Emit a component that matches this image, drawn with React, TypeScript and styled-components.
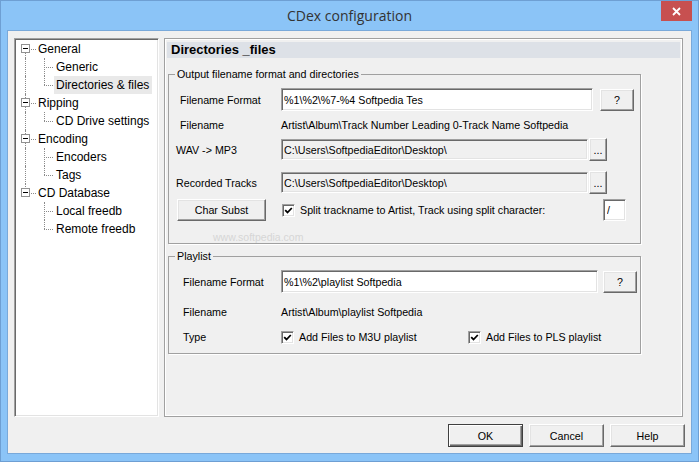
import styled, { createGlobalStyle } from 'styled-components'

const GlobalStyle = createGlobalStyle`
  * { box-sizing: border-box; }
  html, body { margin: 0; padding: 0; }
  body {
    font-family: "Liberation Sans", Arial, sans-serif;
    font-size: 10.7px;
    color: #000;
    background: #8bc4f7;
  }
`

const Frame = styled.div`
  width: 699px;
  height: 462px;
  display: flex;
  flex-direction: column;
  background: #8bc4f7;
  border: 1px solid #6e9fd3;
  padding: 0 6px 7px;
`

const TitleBar = styled.div`
  height: 29px;
  margin: 0 -6px;
  display: grid;
  grid-template-columns: 1fr auto 1fr;
`

const Title = styled.div`
  grid-column: 2;
  align-self: center;
  font-family: "Open Sans", "Noto Sans", sans-serif;
  font-size: 14px;
  color: #333;
`

const CloseButton = styled.div`
  grid-column: 3;
  justify-self: end;
  align-self: start;
  width: 31px;
  height: 20px;
  margin-right: 6px;
  background: #c75050;
  display: flex;
  align-items: center;
  justify-content: center;
`

const Client = styled.div`
  flex: 1;
  display: flex;
  flex-direction: column;
  gap: 7px;
  background: #f0f0f0;
  border: 1px solid #79a9da;
  padding: 7px 8px 6px 6px;
`

const Body = styled.div`
  display: flex;
  gap: 5px;
  height: 379px;
`

const Tree = styled.div`
  flex: none;
  width: 145px;
  padding-top: 1px;
  background: #fff;
  border: 1px solid;
  border-color: #a0a0a0 #fff #fff #a0a0a0;
  box-shadow: inset 1px 1px 0 #696969, inset -1px -1px 0 #e3e3e3;
`

const TreeRow = styled.div`
  display: flex;
  height: 18px;
  white-space: nowrap;
`

const Guide = styled.span<{ $w: number; $x: number; $up?: boolean; $down?: boolean; $branch?: number }>`
  position: relative;
  flex: none;
  width: ${p => p.$w}px;
  &::before {
    content: "";
    display: ${p => (p.$up || p.$down ? 'block' : 'none')};
    position: absolute;
    left: ${p => p.$x}px;
    top: ${p => (p.$up ? 0 : 9)}px;
    bottom: ${p => (p.$down ? 0 : 9)}px;
    border-left: 1px dotted #8a8a8a;
  }
  &::after {
    content: "";
    display: ${p => (p.$branch ? 'block' : 'none')};
    position: absolute;
    left: ${p => p.$x}px;
    top: 9px;
    width: ${p => p.$branch ?? 0}px;
    border-top: 1px dotted #8a8a8a;
  }
`

const Expander = styled.span`
  position: absolute;
  left: 6px;
  top: 4px;
  z-index: 1;
  width: 9px;
  height: 9px;
  background: #fff;
  border: 1px solid #919191;
  &::after {
    content: "";
    position: absolute;
    left: 1px;
    top: 3px;
    width: 5px;
    height: 1px;
    background: #000;
  }
`

const NodeLabel = styled.span<{ $selected?: boolean }>`
  height: 18px;
  line-height: 18px;
  padding: 0 3px 0 2px;
  font-size: 12px;
  background: ${p => (p.$selected ? '#e9e9e9' : 'transparent')};
`

const Page = styled.div`
  flex: 1;
  display: flex;
  flex-direction: column;
  border: 1px solid #a0a0a0;
  box-shadow: inset 0 0 0 1px #fff;
  padding: 3px 2px 0;
`

const PageHeader = styled.div`
  height: 16px;
  line-height: 16px;
  padding-left: 4px;
  background: #dde1e7;
  font-size: 13px;
  font-weight: bold;
`

const Group = styled.fieldset<{ $mt: number; $pb: number }>`
  width: 473px;
  min-width: 0;
  margin: ${p => p.$mt}px 0 0 1px;
  padding: 0 0 ${p => p.$pb}px;
  border: 1px solid #a0a0a0;
  box-shadow: 1px 1px 0 #fff;
`

const Legend = styled.legend`
  margin-left: 6px;
  padding: 0 2px;
  font-size: 10.7px;
  line-height: 13px;
`

const FieldRow = styled.div<{ $mt: number; $h: number }>`
  display: flex;
  align-items: center;
  height: ${p => p.$h}px;
  margin-top: ${p => p.$mt}px;
  white-space: nowrap;
`

const Label = styled.span<{ $indent: number }>`
  flex: none;
  width: 112px;
  padding-left: ${p => p.$indent}px;
`

const TextBox = styled.input<{ $w: number; $h: number; $gray?: boolean }>`
  flex: none;
  width: ${p => p.$w}px;
  height: ${p => p.$h}px;
  font: inherit;
  color: #000;
  background: ${p => (p.$gray ? '#f0f0f0' : '#fff')};
  border: 1px solid;
  border-color: #a0a0a0 #fff #fff #a0a0a0;
  box-shadow: inset 1px 1px 0 #696969, inset -1px -1px 0 #e3e3e3;
  padding: 0 2px;
  margin: 0;
  outline: none;
`

const Button = styled.button<{ $w: number; $h: number; $ml?: number; $default?: boolean }>`
  flex: none;
  width: ${p => p.$w}px;
  height: ${p => p.$h}px;
  margin: 0 0 0 ${p => p.$ml ?? 0}px;
  padding: 0;
  font: inherit;
  color: #000;
  background: #f0f0f0;
  border: 1px solid;
  border-color: ${p => (p.$default ? '#404040' : '#fff #696969 #696969 #fff')};
  box-shadow: ${p =>
    p.$default
      ? 'inset 1px 1px 0 #fff, inset -1px -1px 0 #696969, inset -2px -2px 0 #a0a0a0'
      : 'inset -1px -1px 0 #a0a0a0, inset 1px 1px 0 #e3e3e3'};
`

const ActionRow = styled.div`
  display: flex;
  align-items: center;
  height: 24px;
  margin-top: 4px;
  padding-left: 8px;
  white-space: nowrap;
`

const CheckItem = styled.span<{ $w?: number; $ml?: number }>`
  display: flex;
  align-items: center;
  gap: 5px;
  margin-left: ${p => p.$ml ?? 0}px;
  width: ${p => (p.$w ? `${p.$w}px` : 'auto')};
`

const Box = styled.span`
  flex: none;
  width: 13px;
  height: 13px;
  background: #fff;
  border: 1px solid;
  border-color: #a0a0a0 #fff #fff #a0a0a0;
  box-shadow: inset 1px 1px 0 #696969, inset -1px -1px 0 #e3e3e3;
  display: flex;
  align-items: center;
  justify-content: center;
`

const SplitChar = styled(TextBox)`
  margin-left: auto;
  margin-right: 14px;
  padding-left: 3px;
`

const Watermark = styled.div`
  height: 10px;
  margin-top: 10px;
  padding-left: 44px;
  font-size: 10.5px;
  line-height: 10px;
  color: #d6d6d6;
`

const ButtonBar = styled.div`
  display: flex;
  justify-content: flex-end;
  gap: 6px;
  margin-right: -2px;
`

const tree = [
  { label: 'General', children: ['Generic', 'Directories & files'] },
  { label: 'Ripping', children: ['CD Drive settings'] },
  { label: 'Encoding', children: ['Encoders', 'Tags'] },
  { label: 'CD Database', children: ['Local freedb', 'Remote freedb'] },
]

const Check = () => (
  <Box>
    <svg width="9" height="9" viewBox="0 0 9 9">
      <path d="M1.2 4.2 L3.5 6.5 L7.8 2" fill="none" stroke="#000" strokeWidth="1.8" />
    </svg>
  </Box>
)

const App = () => {
  return (
    <>
      <GlobalStyle />
      <Frame>
        <TitleBar>
          <Title>CDex configuration</Title>
          <CloseButton>
            <svg width="9" height="9" viewBox="0 0 9 9">
              <path d="M1 1 L8 8 M8 1 L1 8" stroke="#fff" strokeWidth="1.8" />
            </svg>
          </CloseButton>
        </TitleBar>
        <Client>
          <Body>
            <Tree>
              {tree.map((node, i) => {
                const lastNode = i === tree.length - 1
                return (
                  <div key={node.label}>
                    <TreeRow>
                      <Guide $w={21} $x={10} $up={i > 0} $down={!lastNode} $branch={11}>
                        <Expander />
                      </Guide>
                      <NodeLabel>{node.label}</NodeLabel>
                    </TreeRow>
                    {node.children.map((child, j) => (
                      <TreeRow key={child}>
                        <Guide $w={21} $x={10} $up={!lastNode} $down={!lastNode} />
                        <Guide $w={18} $x={8} $up $down={j < node.children.length - 1} $branch={9} />
                        <NodeLabel $selected={child === 'Directories & files'}>{child}</NodeLabel>
                      </TreeRow>
                    ))}
                  </div>
                )
              })}
            </Tree>

            <Page>
              <PageHeader>Directories _files</PageHeader>

              <Group $mt={10} $pb={1}>
                <Legend>Output filename format and directories</Legend>
                <FieldRow $mt={7} $h={23}>
                  <Label $indent={11}>Filename Format</Label>
                  <TextBox $w={312} $h={23} readOnly value="%1\%2\%7-%4 Softpedia Tes" />
                  <Button $w={34} $h={22} $ml={7}>?</Button>
                </FieldRow>
                <FieldRow $mt={5} $h={18}>
                  <Label $indent={11}>Filename</Label>
                  <span>Artist\Album\Track Number Leading 0-Track Name Softpedia</span>
                </FieldRow>
                <FieldRow $mt={4} $h={23}>
                  <Label $indent={7}>WAV -&gt; MP3</Label>
                  <TextBox $w={307} $h={21} $gray readOnly value="C:\Users\SoftpediaEditor\Desktop\" />
                  <Button $w={18} $h={23} $ml={1}>...</Button>
                </FieldRow>
                <FieldRow $mt={10} $h={23}>
                  <Label $indent={7}>Recorded Tracks</Label>
                  <TextBox $w={307} $h={21} $gray readOnly value="C:\Users\SoftpediaEditor\Desktop\" />
                  <Button $w={18} $h={23} $ml={1}>...</Button>
                </FieldRow>
                <ActionRow>
                  <Button $w={89} $h={22}>Char Subst</Button>
                  <CheckItem $ml={16}>
                    <Check />
                    <span>Split trackname to Artist, Track using split character:</span>
                  </CheckItem>
                  <SplitChar $w={23} $h={22} readOnly value="/" />
                </ActionRow>
                <Watermark>www.softpedia.com</Watermark>
              </Group>

              <Group $mt={6} $pb={7}>
                <Legend>Playlist</Legend>
                <FieldRow $mt={7} $h={23}>
                  <Label $indent={14}>Filename Format</Label>
                  <TextBox $w={317} $h={23} readOnly value="%1\%2\playlist Softpedia" />
                  <Button $w={34} $h={22} $ml={5}>?</Button>
                </FieldRow>
                <FieldRow $mt={10} $h={18}>
                  <Label $indent={14}>Filename</Label>
                  <span>Artist\Album\playlist Softpedia</span>
                </FieldRow>
                <FieldRow $mt={7} $h={18}>
                  <Label $indent={14}>Type</Label>
                  <CheckItem $w={187}>
                    <Check />
                    <span>Add Files to M3U playlist</span>
                  </CheckItem>
                  <CheckItem>
                    <Check />
                    <span>Add Files to PLS playlist</span>
                  </CheckItem>
                </FieldRow>
              </Group>
            </Page>
          </Body>

          <ButtonBar>
            <Button $w={75} $h={23} $default>OK</Button>
            <Button $w={75} $h={23}>Cancel</Button>
            <Button $w={75} $h={23}>Help</Button>
          </ButtonBar>
        </Client>
      </Frame>
    </>
  )
}

export default App
